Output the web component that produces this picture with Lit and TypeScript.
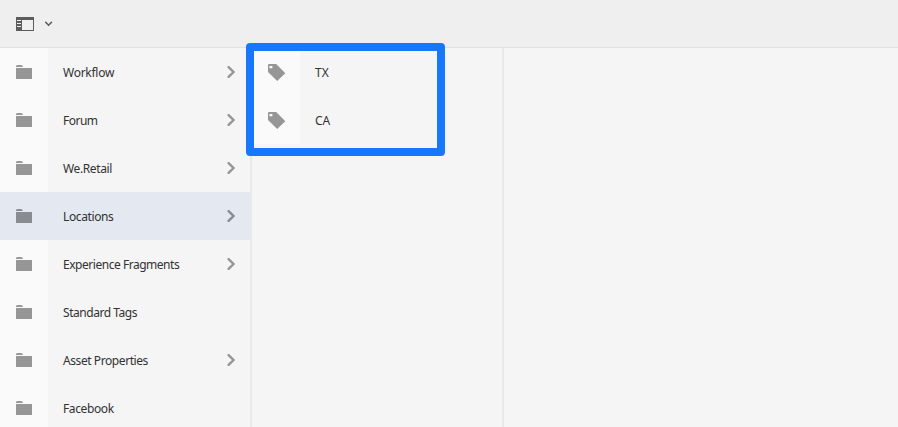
import { LitElement, html, css, svg, nothing } from "lit";
import { customElement } from "lit/decorators.js";

interface Item {
  label: string;
  spacing: number;
  children?: boolean;
  selected?: boolean;
}

const FOLDERS: Item[] = [
  { label: "Workflow", spacing: -0.27, children: true },
  { label: "Forum", spacing: -0.5, children: true },
  { label: "We.Retail", spacing: -0.39, children: true },
  { label: "Locations", spacing: -0.39, children: true, selected: true },
  { label: "Experience Fragments", spacing: -0.47, children: true },
  { label: "Standard Tags", spacing: -0.46 },
  { label: "Asset Properties", spacing: -0.42, children: true },
  { label: "Facebook", spacing: -0.39 },
];

const TAGS: Item[] = [
  { label: "TX", spacing: 0.2 },
  { label: "CA", spacing: 0 },
];

const folderIcon = svg`<svg width="16" height="14" viewBox="0 0 16 14"><path d="M0 2V1l1-1h4.6L7 2zM0 3h16v11H0z" fill="currentColor"/></svg>`;
const tagIcon = svg`<svg class="tag" width="18" height="18" viewBox="0 0 18 18"><path fill-rule="evenodd" d="M.7 0H8.2L17.3 9.2 9.2 17 0 8V.7zM1.4 2v2.2h3V2z" fill="currentColor"/></svg>`;
const chevron = svg`<svg width="9" height="12" viewBox="0 0 9 12"><path d="M1.6 1.1 6.5 6 1.6 10.9" fill="none" stroke="currentColor" stroke-width="2.4" stroke-linecap="round"/></svg>`;

@customElement("app-root")
export class AppRoot extends LitElement {
  static styles = css`
    :host {
      display: flex;
      flex-direction: column;
      position: relative;
      height: 100vh;
      overflow: hidden;
      background: #f5f5f5;
      color: #323232;
      font: 12px/18px "Noto Sans", sans-serif;
    }
    svg { display: block; }
    .bar {
      flex: none;
      box-sizing: border-box;
      height: 48px;
      padding: 0 16px;
      display: flex;
      align-items: center;
      gap: 11px;
      background: #efefef;
      border-bottom: 1px solid #e1e1e1;
      color: #5c5c5c;
    }
    .columns { flex: 1; min-height: 0; display: flex; }
    .column {
      flex: none;
      width: 250px;
      border-right: 2px solid #e9e9e9;
    }
    .row { display: flex; height: 48px; align-items: center; }
    .thumb {
      flex: none;
      box-sizing: border-box;
      width: 48px;
      height: 48px;
      padding-left: 16px;
      display: flex;
      align-items: center;
      background: #fafafa;
      color: #969696;
    }
    .tag { margin-top: 2px; }
    .label { flex: 1; padding: 2px 0 0 15px; white-space: nowrap; }
    .more { padding-right: 14px; color: #969696; }
    .selected { background: #e4e9f1; }
    .selected .thumb { background: none; color: #898c91; }
    .selected .more { color: #898c91; }
    .highlight {
      position: absolute;
      box-sizing: border-box;
      left: 246px;
      top: 43px;
      width: 199px;
      height: 113px;
      border: 8px solid #1877ff;
      border-radius: 4px;
    }
  `;

  private row(item: Item, icon: unknown) {
    return html`<div class="row ${item.selected ? "selected" : ""}">
      <div class="thumb">${icon}</div>
      <div class="label"><span style="letter-spacing:${item.spacing}px">${item.label}</span></div>
      ${item.children ? html`<div class="more">${chevron}</div>` : nothing}
    </div>`;
  }

  render() {
    return html`
      <div class="bar">
        <svg width="18" height="14" viewBox="0 0 18 14">
          <path fill="currentColor" fill-rule="evenodd" d="M0 0h18v14H0zM6 3v10h11V3zM1 3v1h4V3zM1 6v1h4V6zM1 9v1h4V9z"/>
        </svg>
        <svg width="8" height="6" viewBox="0 0 8 6">
          <path d="M.7 1.3 3.6 4.2 6.5 1.3" fill="none" stroke="currentColor" stroke-width="1.6" stroke-linecap="round"/>
        </svg>
      </div>
      <div class="columns">
        <div class="column">${FOLDERS.map((f) => this.row(f, folderIcon))}</div>
        <div class="column">${TAGS.map((t) => this.row(t, tagIcon))}</div>
      </div>
      <div class="highlight"></div>
    `;
  }
}
